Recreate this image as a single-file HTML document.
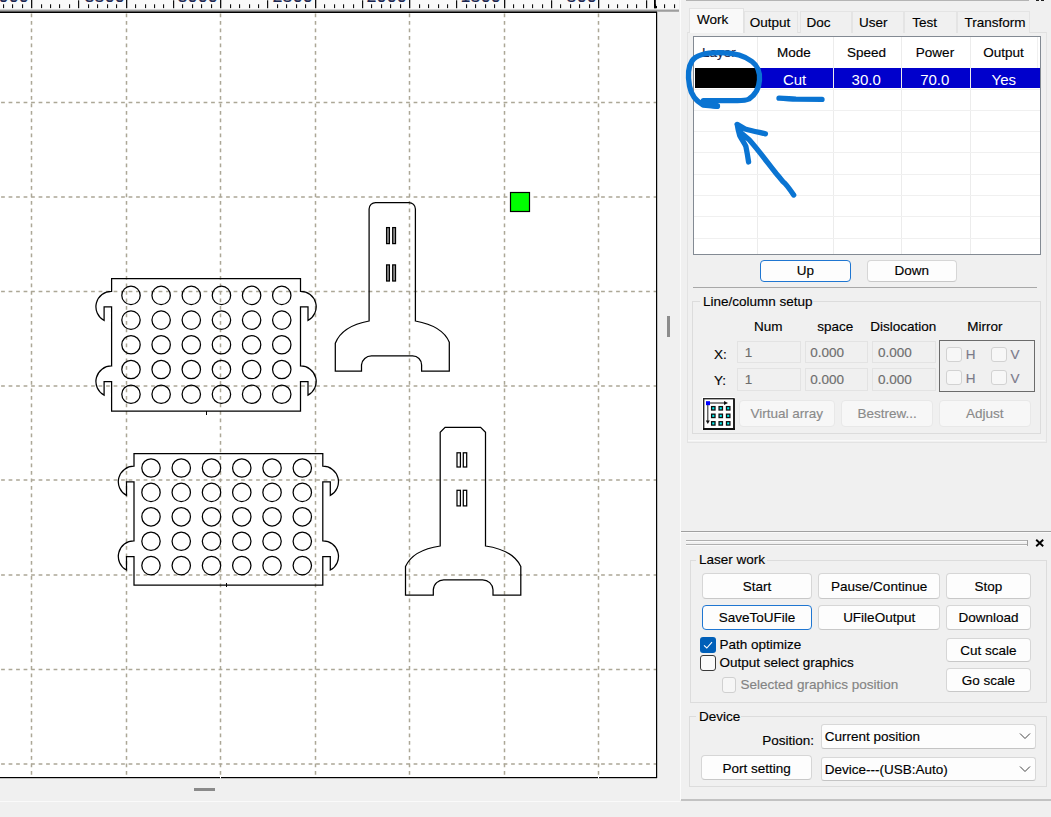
<!DOCTYPE html>
<html><head><meta charset="utf-8"><style>
html,body{margin:0;padding:0;}
body{width:1051px;height:817px;overflow:hidden;background:#f0f0f0;position:relative;font-family:"Liberation Sans", sans-serif;}
.abs{position:absolute;}
.t{position:absolute;white-space:nowrap;-webkit-text-stroke:0.15px currentColor;}
.r{position:absolute;}
</style></head><body>
<svg class="abs" style="left:0;top:0" width="680" height="817" viewBox="0 0 680 817">
<rect x="0" y="12" width="656.5" height="765.5" fill="#fff"/>
<line x1="31.5" y1="13" x2="31.5" y2="777" stroke="#aca796" stroke-width="1.5" stroke-dasharray="3.75 3.75" stroke-dashoffset="7.00"/>
<line x1="126.5" y1="13" x2="126.5" y2="777" stroke="#aca796" stroke-width="1.5" stroke-dasharray="3.75 3.75" stroke-dashoffset="7.00"/>
<line x1="220.5" y1="13" x2="220.5" y2="777" stroke="#aca796" stroke-width="1.5" stroke-dasharray="3.75 3.75" stroke-dashoffset="7.00"/>
<line x1="315.5" y1="13" x2="315.5" y2="777" stroke="#aca796" stroke-width="1.5" stroke-dasharray="3.75 3.75" stroke-dashoffset="7.00"/>
<line x1="409.5" y1="13" x2="409.5" y2="777" stroke="#aca796" stroke-width="1.5" stroke-dasharray="3.75 3.75" stroke-dashoffset="7.00"/>
<line x1="504.5" y1="13" x2="504.5" y2="777" stroke="#aca796" stroke-width="1.5" stroke-dasharray="3.75 3.75" stroke-dashoffset="7.00"/>
<line x1="598.5" y1="13" x2="598.5" y2="777" stroke="#aca796" stroke-width="1.5" stroke-dasharray="3.75 3.75" stroke-dashoffset="7.00"/>
<line x1="0" y1="102.5" x2="656" y2="102.5" stroke="#aca796" stroke-width="1.5" stroke-dasharray="3.75 3.75" stroke-dashoffset="6.40"/>
<line x1="0" y1="197" x2="656" y2="197" stroke="#aca796" stroke-width="1.5" stroke-dasharray="3.75 3.75" stroke-dashoffset="6.40"/>
<line x1="0" y1="291.5" x2="656" y2="291.5" stroke="#aca796" stroke-width="1.5" stroke-dasharray="3.75 3.75" stroke-dashoffset="6.40"/>
<line x1="0" y1="386" x2="656" y2="386" stroke="#aca796" stroke-width="1.5" stroke-dasharray="3.75 3.75" stroke-dashoffset="6.40"/>
<line x1="0" y1="480" x2="656" y2="480" stroke="#aca796" stroke-width="1.5" stroke-dasharray="3.75 3.75" stroke-dashoffset="6.40"/>
<line x1="0" y1="575" x2="656" y2="575" stroke="#aca796" stroke-width="1.5" stroke-dasharray="3.75 3.75" stroke-dashoffset="6.40"/>
<line x1="0" y1="669.5" x2="656" y2="669.5" stroke="#aca796" stroke-width="1.5" stroke-dasharray="3.75 3.75" stroke-dashoffset="6.40"/>
<line x1="0" y1="764" x2="656" y2="764" stroke="#aca796" stroke-width="1.5" stroke-dasharray="3.75 3.75" stroke-dashoffset="6.40"/>
<rect x="656" y="12" width="1.2" height="766" fill="#000"/>
<rect x="0" y="777" width="657" height="1.2" fill="#000"/>
<rect x="220" y="776.5" width="1" height="2" fill="#fff"/>
<rect x="598" y="776.5" width="1" height="2" fill="#fff"/>
<rect x="0" y="0" width="679" height="9" fill="#f9f9f9"/>
<defs><linearGradient id="rg" x1="0" y1="0" x2="0" y2="1"><stop offset="0" stop-color="#e6e6e6"/><stop offset="1" stop-color="#6e6e6e"/></linearGradient></defs>
<rect x="0" y="9" width="679" height="2.5" fill="url(#rg)"/>
<rect x="0" y="11.5" width="657" height="1.5" fill="#000"/>
<rect x="3" y="4.3" width="1.1" height="3.8" fill="#111"/>
<rect x="12" y="4.3" width="1.1" height="3.8" fill="#111"/>
<rect x="22" y="4.3" width="1.1" height="3.8" fill="#111"/>
<rect x="31" y="0" width="1.3" height="8.2" fill="#111"/>
<rect x="41" y="4.3" width="1.1" height="3.8" fill="#111"/>
<rect x="50" y="4.3" width="1.1" height="3.8" fill="#111"/>
<rect x="59" y="4.3" width="1.1" height="3.8" fill="#111"/>
<rect x="69" y="4.3" width="1.1" height="3.8" fill="#111"/>
<rect x="78" y="0.3" width="1.2" height="7.9" fill="#111"/>
<rect x="88" y="4.3" width="1.1" height="3.8" fill="#111"/>
<rect x="97" y="4.3" width="1.1" height="3.8" fill="#111"/>
<rect x="107" y="4.3" width="1.1" height="3.8" fill="#111"/>
<rect x="116" y="4.3" width="1.1" height="3.8" fill="#111"/>
<rect x="126" y="0" width="1.3" height="8.2" fill="#111"/>
<rect x="135" y="4.3" width="1.1" height="3.8" fill="#111"/>
<rect x="145" y="4.3" width="1.1" height="3.8" fill="#111"/>
<rect x="154" y="4.3" width="1.1" height="3.8" fill="#111"/>
<rect x="163" y="4.3" width="1.1" height="3.8" fill="#111"/>
<rect x="173" y="0.3" width="1.2" height="7.9" fill="#111"/>
<rect x="182" y="4.3" width="1.1" height="3.8" fill="#111"/>
<rect x="192" y="4.3" width="1.1" height="3.8" fill="#111"/>
<rect x="201" y="4.3" width="1.1" height="3.8" fill="#111"/>
<rect x="211" y="4.3" width="1.1" height="3.8" fill="#111"/>
<rect x="220" y="0" width="1.3" height="8.2" fill="#111"/>
<rect x="230" y="4.3" width="1.1" height="3.8" fill="#111"/>
<rect x="239" y="4.3" width="1.1" height="3.8" fill="#111"/>
<rect x="249" y="4.3" width="1.1" height="3.8" fill="#111"/>
<rect x="258" y="4.3" width="1.1" height="3.8" fill="#111"/>
<rect x="267" y="0.3" width="1.2" height="7.9" fill="#111"/>
<rect x="277" y="4.3" width="1.1" height="3.8" fill="#111"/>
<rect x="286" y="4.3" width="1.1" height="3.8" fill="#111"/>
<rect x="296" y="4.3" width="1.1" height="3.8" fill="#111"/>
<rect x="305" y="4.3" width="1.1" height="3.8" fill="#111"/>
<rect x="315" y="0" width="1.3" height="8.2" fill="#111"/>
<rect x="324" y="4.3" width="1.1" height="3.8" fill="#111"/>
<rect x="334" y="4.3" width="1.1" height="3.8" fill="#111"/>
<rect x="343" y="4.3" width="1.1" height="3.8" fill="#111"/>
<rect x="353" y="4.3" width="1.1" height="3.8" fill="#111"/>
<rect x="362" y="0.3" width="1.2" height="7.9" fill="#111"/>
<rect x="371" y="4.3" width="1.1" height="3.8" fill="#111"/>
<rect x="381" y="4.3" width="1.1" height="3.8" fill="#111"/>
<rect x="390" y="4.3" width="1.1" height="3.8" fill="#111"/>
<rect x="400" y="4.3" width="1.1" height="3.8" fill="#111"/>
<rect x="409" y="0" width="1.3" height="8.2" fill="#111"/>
<rect x="419" y="4.3" width="1.1" height="3.8" fill="#111"/>
<rect x="428" y="4.3" width="1.1" height="3.8" fill="#111"/>
<rect x="438" y="4.3" width="1.1" height="3.8" fill="#111"/>
<rect x="447" y="4.3" width="1.1" height="3.8" fill="#111"/>
<rect x="456" y="0.3" width="1.2" height="7.9" fill="#111"/>
<rect x="466" y="4.3" width="1.1" height="3.8" fill="#111"/>
<rect x="475" y="4.3" width="1.1" height="3.8" fill="#111"/>
<rect x="485" y="4.3" width="1.1" height="3.8" fill="#111"/>
<rect x="494" y="4.3" width="1.1" height="3.8" fill="#111"/>
<rect x="504" y="0" width="1.3" height="8.2" fill="#111"/>
<rect x="513" y="4.3" width="1.1" height="3.8" fill="#111"/>
<rect x="523" y="4.3" width="1.1" height="3.8" fill="#111"/>
<rect x="532" y="4.3" width="1.1" height="3.8" fill="#111"/>
<rect x="542" y="4.3" width="1.1" height="3.8" fill="#111"/>
<rect x="551" y="0.3" width="1.2" height="7.9" fill="#111"/>
<rect x="560" y="4.3" width="1.1" height="3.8" fill="#111"/>
<rect x="570" y="4.3" width="1.1" height="3.8" fill="#111"/>
<rect x="579" y="4.3" width="1.1" height="3.8" fill="#111"/>
<rect x="589" y="4.3" width="1.1" height="3.8" fill="#111"/>
<rect x="598" y="0" width="1.3" height="8.2" fill="#111"/>
<rect x="608" y="4.3" width="1.1" height="3.8" fill="#111"/>
<rect x="617" y="4.3" width="1.1" height="3.8" fill="#111"/>
<rect x="627" y="4.3" width="1.1" height="3.8" fill="#111"/>
<rect x="636" y="4.3" width="1.1" height="3.8" fill="#111"/>
<rect x="646" y="0.3" width="1.2" height="7.9" fill="#111"/>
<rect x="655" y="4.3" width="1.1" height="3.8" fill="#111"/>
<rect x="664" y="4.3" width="1.1" height="3.8" fill="#111"/>
<rect x="674" y="4.3" width="1.1" height="3.8" fill="#111"/>
<rect x="654" y="0" width="1.8" height="8.2" fill="#000"/><rect x="654" y="6" width="3" height="2.2" fill="#000"/>
</svg>
<div class="abs" style="left:0;top:0;width:656px;height:2.4px;overflow:hidden">
<div class="t" style="left:-31px;top:-12.3px;width:60px;text-align:right;font-size:17px;line-height:17px;color:#1a2550;letter-spacing:0.6px;-webkit-text-stroke:0.4px #1a2550">4000</div>
<div class="t" style="left:65px;top:-12.3px;width:60px;text-align:right;font-size:17px;line-height:17px;color:#1a2550;letter-spacing:0.6px;-webkit-text-stroke:0.4px #1a2550">3500</div>
<div class="t" style="left:158px;top:-12.3px;width:60px;text-align:right;font-size:17px;line-height:17px;color:#1a2550;letter-spacing:0.6px;-webkit-text-stroke:0.4px #1a2550">3000</div>
<div class="t" style="left:253px;top:-12.3px;width:60px;text-align:right;font-size:17px;line-height:17px;color:#1a2550;letter-spacing:0.6px;-webkit-text-stroke:0.4px #1a2550">2500</div>
<div class="t" style="left:347px;top:-12.3px;width:60px;text-align:right;font-size:17px;line-height:17px;color:#1a2550;letter-spacing:0.6px;-webkit-text-stroke:0.4px #1a2550">2000</div>
<div class="t" style="left:441px;top:-12.3px;width:60px;text-align:right;font-size:17px;line-height:17px;color:#1a2550;letter-spacing:0.6px;-webkit-text-stroke:0.4px #1a2550">1500</div>
<div class="t" style="left:537px;top:-12.3px;width:60px;text-align:right;font-size:17px;line-height:17px;color:#1a2550;letter-spacing:0.6px;-webkit-text-stroke:0.4px #1a2550">500</div>
</div>
<svg class="abs" style="left:0;top:0" width="680" height="817" viewBox="0 0 680 817"><g fill="none" stroke="#000" stroke-width="1.25">
<path d="M 111.6 278.7 H 300.5 V 291.30 A 15.5 15.5 0 0 1 308.00 320.46 V 306.90 H 300.50 V 366.00 A 15.5 15.5 0 0 1 308.00 395.16 V 381.60 H 300.50 V 411.1 H 111.6 V 381.60 H 104.10 V 395.16 A 15.5 15.5 0 0 1 111.60 366.00 V 306.90 H 104.10 V 320.46 A 15.5 15.5 0 0 1 111.60 291.30 Z"/>
<circle cx="131.00" cy="295.40" r="9.2"/>
<circle cx="161.15" cy="295.40" r="9.2"/>
<circle cx="191.30" cy="295.40" r="9.2"/>
<circle cx="221.45" cy="295.40" r="9.2"/>
<circle cx="251.60" cy="295.40" r="9.2"/>
<circle cx="281.75" cy="295.40" r="9.2"/>
<circle cx="131.00" cy="320.10" r="9.2"/>
<circle cx="161.15" cy="320.10" r="9.2"/>
<circle cx="191.30" cy="320.10" r="9.2"/>
<circle cx="221.45" cy="320.10" r="9.2"/>
<circle cx="251.60" cy="320.10" r="9.2"/>
<circle cx="281.75" cy="320.10" r="9.2"/>
<circle cx="131.00" cy="344.80" r="9.2"/>
<circle cx="161.15" cy="344.80" r="9.2"/>
<circle cx="191.30" cy="344.80" r="9.2"/>
<circle cx="221.45" cy="344.80" r="9.2"/>
<circle cx="251.60" cy="344.80" r="9.2"/>
<circle cx="281.75" cy="344.80" r="9.2"/>
<circle cx="131.00" cy="369.50" r="9.2"/>
<circle cx="161.15" cy="369.50" r="9.2"/>
<circle cx="191.30" cy="369.50" r="9.2"/>
<circle cx="221.45" cy="369.50" r="9.2"/>
<circle cx="251.60" cy="369.50" r="9.2"/>
<circle cx="281.75" cy="369.50" r="9.2"/>
<circle cx="131.00" cy="394.20" r="9.2"/>
<circle cx="161.15" cy="394.20" r="9.2"/>
<circle cx="191.30" cy="394.20" r="9.2"/>
<circle cx="221.45" cy="394.20" r="9.2"/>
<circle cx="251.60" cy="394.20" r="9.2"/>
<circle cx="281.75" cy="394.20" r="9.2"/>
<path d="M 134.0 453.6 H 322.8 V 466.20 A 15.5 15.5 0 0 1 330.30 495.36 V 481.80 H 322.80 V 540.90 A 15.5 15.5 0 0 1 330.30 570.06 V 556.50 H 322.80 V 585.0 H 134.0 V 556.50 H 126.50 V 570.06 A 15.5 15.5 0 0 1 134.00 540.90 V 481.80 H 126.50 V 495.36 A 15.5 15.5 0 0 1 134.00 466.20 Z"/>
<circle cx="151.00" cy="468.00" r="9.2"/>
<circle cx="181.26" cy="468.00" r="9.2"/>
<circle cx="211.52" cy="468.00" r="9.2"/>
<circle cx="241.78" cy="468.00" r="9.2"/>
<circle cx="272.04" cy="468.00" r="9.2"/>
<circle cx="302.30" cy="468.00" r="9.2"/>
<circle cx="151.00" cy="492.40" r="9.2"/>
<circle cx="181.26" cy="492.40" r="9.2"/>
<circle cx="211.52" cy="492.40" r="9.2"/>
<circle cx="241.78" cy="492.40" r="9.2"/>
<circle cx="272.04" cy="492.40" r="9.2"/>
<circle cx="302.30" cy="492.40" r="9.2"/>
<circle cx="151.00" cy="516.80" r="9.2"/>
<circle cx="181.26" cy="516.80" r="9.2"/>
<circle cx="211.52" cy="516.80" r="9.2"/>
<circle cx="241.78" cy="516.80" r="9.2"/>
<circle cx="272.04" cy="516.80" r="9.2"/>
<circle cx="302.30" cy="516.80" r="9.2"/>
<circle cx="151.00" cy="541.20" r="9.2"/>
<circle cx="181.26" cy="541.20" r="9.2"/>
<circle cx="211.52" cy="541.20" r="9.2"/>
<circle cx="241.78" cy="541.20" r="9.2"/>
<circle cx="272.04" cy="541.20" r="9.2"/>
<circle cx="302.30" cy="541.20" r="9.2"/>
<circle cx="151.00" cy="565.60" r="9.2"/>
<circle cx="181.26" cy="565.60" r="9.2"/>
<circle cx="211.52" cy="565.60" r="9.2"/>
<circle cx="241.78" cy="565.60" r="9.2"/>
<circle cx="272.04" cy="565.60" r="9.2"/>
<circle cx="302.30" cy="565.60" r="9.2"/>
<line x1="206.5" y1="411" x2="206.5" y2="415" stroke-width="1"/>
<line x1="226.5" y1="583" x2="226.5" y2="587" stroke-width="1"/>
<path d="M 369.1 321 V 209 A 6.5 6.5 0 0 1 375.6 202.5 H 408.9 A 6.5 6.5 0 0 1 415.4 209 V 321 Q 442.7 326 449.3 342.3 V 371.2 H 421.6 V 364.9 A 9 9 0 0 0 412.6 355.9 H 371.5 A 10 10 0 0 0 361.5 364.9 V 371.2 H 335.3 V 343.3 Q 342 326 369.1 321 Z"/>
<rect x="386.6" y="227.6" width="2.8" height="16.0" fill="#9a9a9a"/>
<rect x="392.7" y="227.6" width="2.8" height="16.0" fill="#9a9a9a"/>
<rect x="386.6" y="264.9" width="2.8" height="16.1" fill="#9a9a9a"/>
<rect x="392.7" y="264.9" width="2.8" height="16.1" fill="#9a9a9a"/>
<path d="M 440.2 546 V 432.2 L 445.1 427.3 H 480.6 L 485.5 432.2 V 546 Q 513 550 520.8 566.5 V 595.2 H 493 V 589.7 A 10.5 10.5 0 0 0 482.5 579.8 H 444 A 10.5 10.5 0 0 0 433.3 589.7 V 595.2 H 405.5 V 566.5 Q 413 550 440.2 546 Z"/>
<rect x="457" y="452.8" width="3.4" height="14.2"/>
<rect x="463.3" y="452.8" width="3.4" height="14.2"/>
<rect x="457" y="490.3" width="3.4" height="15.6"/>
<rect x="463.3" y="490.3" width="3.4" height="15.6"/>
</g><rect x="510.5" y="192.5" width="19" height="19" fill="#00ff00" stroke="#000" stroke-width="1.2"/>
</svg>
<div class="r" style="left:667.0px;top:316.0px;width:3.0px;height:21.0px;background:#8c8c8c"></div>
<div class="r" style="left:194.0px;top:788.0px;width:21.0px;height:2.5px;background:#8a8a8a"></div>
<div class="r" style="left:0.0px;top:800.5px;width:680.0px;height:1.0px;background:#fafafa"></div>
<div class="r" style="left:680.0px;top:0.0px;width:1.0px;height:800.0px;background:#fbfbfb"></div>
<div class="r" style="left:681.0px;top:799.0px;width:370.0px;height:1.5px;background:#c2c2c2"></div>
<div class="r" style="left:686.0px;top:0.0px;width:343.0px;height:1.2px;background:#b4b4b4"></div>
<div class="r" style="left:1036.0px;top:0.0px;width:3.0px;height:1.0px;background:#222"></div>
<div class="r" style="left:1041.0px;top:0.0px;width:3.0px;height:1.0px;background:#222"></div>
<div class="r" style="left:687.0px;top:32.0px;width:358.0px;height:409.0px;border:1px solid #e3e3e3;border-top-color:#e0e0e0;background:#f0f0f0"></div>
<div class="r" style="left:688.0px;top:439.5px;width:356.5px;height:1.5px;background:#f9f9f9"></div>
<div class="r" style="left:744.4px;top:10.7px;width:53.9px;height:22.3px;background:#f0f0f0;border:1px solid #e4e4e4;border-bottom:none;box-sizing:border-box"></div>
<div class="t" style="left:749.7px;top:15.57px;font-size:13.5px;line-height:13.5px;color:#000;">Output</div>
<div class="r" style="left:800.0px;top:10.7px;width:51.6px;height:22.3px;background:#f0f0f0;border:1px solid #e4e4e4;border-bottom:none;box-sizing:border-box"></div>
<div class="t" style="left:806.6px;top:15.57px;font-size:13.5px;line-height:13.5px;color:#000;">Doc</div>
<div class="r" style="left:851.6px;top:10.7px;width:52.4px;height:22.3px;background:#f0f0f0;border:1px solid #e4e4e4;border-bottom:none;box-sizing:border-box"></div>
<div class="t" style="left:859.1px;top:15.57px;font-size:13.5px;line-height:13.5px;color:#000;">User</div>
<div class="r" style="left:904.0px;top:10.7px;width:52.5px;height:22.3px;background:#f0f0f0;border:1px solid #e4e4e4;border-bottom:none;box-sizing:border-box"></div>
<div class="t" style="left:912.3px;top:15.57px;font-size:13.5px;line-height:13.5px;color:#000;">Test</div>
<div class="r" style="left:956.5px;top:10.7px;width:73.5px;height:22.3px;background:#f0f0f0;border:1px solid #e4e4e4;border-bottom:none;box-sizing:border-box"></div>
<div class="t" style="left:964.5px;top:15.57px;font-size:13.5px;line-height:13.5px;color:#000;">Transform</div>
<div class="r" style="left:688.5px;top:7.6px;width:55.5px;height:25.9px;background:#f9f9f9;border:1px solid #e2e2e2;border-bottom:none;box-sizing:border-box"></div>
<div class="t" style="left:697.1px;top:13.27px;font-size:13.5px;line-height:13.5px;color:#000;">Work</div>
<div class="r" style="left:692.5px;top:36.0px;width:348.5px;height:219.0px;background:#fff;border:1px solid #838a93;box-sizing:border-box"></div>
<div class="r" style="left:756.5px;top:37.0px;width:1.0px;height:217.0px;background:#ececec"></div>
<div class="r" style="left:832.5px;top:37.0px;width:1.0px;height:217.0px;background:#ececec"></div>
<div class="r" style="left:901.0px;top:37.0px;width:1.0px;height:217.0px;background:#ececec"></div>
<div class="r" style="left:969.5px;top:37.0px;width:1.0px;height:217.0px;background:#ececec"></div>
<div class="r" style="left:1037.0px;top:37.0px;width:1.0px;height:31.0px;background:#f0f0f0"></div>
<div class="r" style="left:693.5px;top:88.5px;width:346.5px;height:1.0px;background:#f0f0f0"></div>
<div class="r" style="left:693.5px;top:109.8px;width:346.5px;height:1.0px;background:#f0f0f0"></div>
<div class="r" style="left:693.5px;top:131.1px;width:346.5px;height:1.0px;background:#f0f0f0"></div>
<div class="r" style="left:693.5px;top:152.4px;width:346.5px;height:1.0px;background:#f0f0f0"></div>
<div class="r" style="left:693.5px;top:173.7px;width:346.5px;height:1.0px;background:#f0f0f0"></div>
<div class="r" style="left:693.5px;top:195.0px;width:346.5px;height:1.0px;background:#f0f0f0"></div>
<div class="r" style="left:693.5px;top:216.3px;width:346.5px;height:1.0px;background:#f0f0f0"></div>
<div class="r" style="left:693.5px;top:237.6px;width:346.5px;height:1.0px;background:#f0f0f0"></div>
<div class="t" style="left:702.0px;top:46.37px;font-size:13.5px;line-height:13.5px;color:#202040;">Layer</div>
<div class="t" style="left:754.0px;top:46.37px;width:80px;text-align:center;font-size:13.5px;line-height:13.5px;color:#000;">Mode</div>
<div class="t" style="left:826.5px;top:46.37px;width:80px;text-align:center;font-size:13.5px;line-height:13.5px;color:#000;">Speed</div>
<div class="t" style="left:895.0px;top:46.37px;width:80px;text-align:center;font-size:13.5px;line-height:13.5px;color:#000;">Power</div>
<div class="t" style="left:963.5px;top:46.37px;width:80px;text-align:center;font-size:13.5px;line-height:13.5px;color:#000;">Output</div>
<div class="r" style="left:694.5px;top:68.0px;width:62.0px;height:20.0px;background:#000"></div>
<div class="r" style="left:757.5px;top:68.0px;width:75.0px;height:20.0px;background:#0000cc"></div>
<div class="r" style="left:833.5px;top:68.0px;width:67.5px;height:20.0px;background:#0000cc"></div>
<div class="r" style="left:902.0px;top:68.0px;width:67.5px;height:20.0px;background:#0000cc"></div>
<div class="r" style="left:970.5px;top:68.0px;width:69.0px;height:20.0px;background:#0000cc"></div>
<div class="t" style="left:759.6px;top:71.60px;width:70px;text-align:center;font-size:15px;line-height:15px;color:#fff;-webkit-text-stroke:0">Cut</div>
<div class="t" style="left:831.2px;top:71.60px;width:70px;text-align:center;font-size:15px;line-height:15px;color:#fff;-webkit-text-stroke:0">30.0</div>
<div class="t" style="left:899.8px;top:71.60px;width:70px;text-align:center;font-size:15px;line-height:15px;color:#fff;-webkit-text-stroke:0">70.0</div>
<div class="t" style="left:968.8px;top:71.60px;width:70px;text-align:center;font-size:15px;line-height:15px;color:#fff;-webkit-text-stroke:0">Yes</div>
<div class="r" style="left:760.0px;top:260.0px;width:90.6px;height:21.5px;background:#fdfdfd;border:1.3px solid #1f76d1;border-radius:4px;box-sizing:border-box"></div>
<div class="t" style="left:740.0px;top:263.92px;width:130.60000000000002px;text-align:center;font-size:13.5px;line-height:13.5px;color:#000;">Up</div>
<div class="r" style="left:866.8px;top:260.0px;width:90.0px;height:21.5px;background:#fdfdfd;border:1px solid #d6d6d6;border-bottom-color:#c8c8c8;border-radius:4px;box-sizing:border-box"></div>
<div class="t" style="left:846.8px;top:263.92px;width:130.0px;text-align:center;font-size:13.5px;line-height:13.5px;color:#000;">Down</div>
<div class="r" style="left:692.5px;top:286.6px;width:344.8px;height:1.2px;background:#a8a8a8"></div>
<div class="r" style="left:692.2px;top:301.2px;width:348.4px;height:132.4px;border:1px solid #dcdcdc;box-sizing:border-box"></div>
<div class="r" style="left:700.0px;top:295.0px;width:113.0px;height:11.0px;background:#f0f0f0"></div>
<div class="t" style="left:703.0px;top:294.77px;font-size:13.5px;line-height:13.5px;color:#000;">Line/column setup</div>
<div class="t" style="left:738.2px;top:320.37px;width:60px;text-align:center;font-size:13.5px;line-height:13.5px;color:#000;">Num</div>
<div class="t" style="left:805.2px;top:320.37px;width:60px;text-align:center;font-size:13.5px;line-height:13.5px;color:#000;">space</div>
<div class="t" style="left:858.3px;top:320.37px;width:90px;text-align:center;font-size:13.5px;line-height:13.5px;color:#000;">Dislocation</div>
<div class="t" style="left:954.8px;top:320.37px;width:60px;text-align:center;font-size:13.5px;line-height:13.5px;color:#000;">Mirror</div>
<div class="t" style="left:714.0px;top:347.77px;font-size:13.5px;line-height:13.5px;color:#000;">X:</div>
<div class="t" style="left:714.0px;top:374.37px;font-size:13.5px;line-height:13.5px;color:#000;">Y:</div>
<div class="r" style="left:736.9px;top:341.2px;width:64.0px;height:21.8px;background:#f0f0f0;border:1px solid #e3e3e3;box-sizing:border-box"></div>
<div class="r" style="left:804.8px;top:341.2px;width:63.2px;height:21.8px;background:#f0f0f0;border:1px solid #e3e3e3;box-sizing:border-box"></div>
<div class="r" style="left:872.1px;top:341.2px;width:63.9px;height:21.8px;background:#f0f0f0;border:1px solid #e3e3e3;box-sizing:border-box"></div>
<div class="t" style="left:744.7px;top:345.57px;font-size:13.5px;line-height:13.5px;color:#6d6d6d;">1</div>
<div class="t" style="left:810.3px;top:345.57px;font-size:13.5px;line-height:13.5px;color:#6d6d6d;">0.000</div>
<div class="t" style="left:878.0px;top:345.57px;font-size:13.5px;line-height:13.5px;color:#6d6d6d;">0.000</div>
<div class="r" style="left:736.9px;top:368.2px;width:64.0px;height:22.5px;background:#f0f0f0;border:1px solid #e3e3e3;box-sizing:border-box"></div>
<div class="r" style="left:804.8px;top:368.2px;width:63.2px;height:22.5px;background:#f0f0f0;border:1px solid #e3e3e3;box-sizing:border-box"></div>
<div class="r" style="left:872.1px;top:368.2px;width:63.9px;height:22.5px;background:#f0f0f0;border:1px solid #e3e3e3;box-sizing:border-box"></div>
<div class="t" style="left:744.7px;top:372.77px;font-size:13.5px;line-height:13.5px;color:#6d6d6d;">1</div>
<div class="t" style="left:810.3px;top:372.77px;font-size:13.5px;line-height:13.5px;color:#6d6d6d;">0.000</div>
<div class="t" style="left:878.0px;top:372.77px;font-size:13.5px;line-height:13.5px;color:#6d6d6d;">0.000</div>
<div class="r" style="left:939.0px;top:339.8px;width:95.5px;height:52.2px;border:1.4px solid #6b6b6b;box-sizing:border-box"></div>
<div class="r" style="left:946.2px;top:346.7px;width:15.6px;height:15.0px;background:#f7f7f7;border:1px solid #d2d2d2;border-radius:3px;box-sizing:border-box"></div>
<div class="t" style="left:965.8px;top:347.57px;font-size:13.5px;line-height:13.5px;color:#7a7a8a;">H</div>
<div class="r" style="left:991.2px;top:346.7px;width:15.6px;height:15.0px;background:#f7f7f7;border:1px solid #d2d2d2;border-radius:3px;box-sizing:border-box"></div>
<div class="t" style="left:1010.4px;top:347.57px;font-size:13.5px;line-height:13.5px;color:#7a7a8a;">V</div>
<div class="r" style="left:946.2px;top:369.8px;width:15.6px;height:15.0px;background:#f7f7f7;border:1px solid #d2d2d2;border-radius:3px;box-sizing:border-box"></div>
<div class="t" style="left:965.8px;top:372.17px;font-size:13.5px;line-height:13.5px;color:#7a7a8a;">H</div>
<div class="r" style="left:991.2px;top:369.8px;width:15.6px;height:15.0px;background:#f7f7f7;border:1px solid #d2d2d2;border-radius:3px;box-sizing:border-box"></div>
<div class="t" style="left:1010.4px;top:372.17px;font-size:13.5px;line-height:13.5px;color:#7a7a8a;">V</div>
<svg class="abs" style="left:702px;top:396.5px" width="34" height="34" viewBox="0 0 34 34"><rect x="0" y="0" width="33" height="33" fill="#fff"/><rect x="1.7" y="1.7" width="30" height="30" fill="#fff" stroke="#2a2a2a" stroke-width="1.4"/><rect x="31" y="1.5" width="2" height="31.5" fill="#222"/><rect x="1" y="31" width="32" height="2" fill="#111"/><rect x="4" y="4.2" width="4" height="4" fill="#0000ff"/><line x1="8" y1="6" x2="24" y2="6" stroke="#111" stroke-width="1"/><path d="M22 4 L26 6 L22 8 Z" fill="#111"/><line x1="5.8" y1="8" x2="5.8" y2="24" stroke="#333" stroke-width="1.1"/><path d="M3.8 23.5 L5.8 27 L7.8 23.5 Z" fill="#111"/><rect x="9.60" y="9.60" width="3.4" height="3.4" fill="#00f0f0" stroke="#111" stroke-width="1.3"/><rect x="17.05" y="9.60" width="3.4" height="3.4" fill="#00f0f0" stroke="#111" stroke-width="1.3"/><rect x="24.50" y="9.60" width="3.4" height="3.4" fill="#00f0f0" stroke="#111" stroke-width="1.3"/><rect x="9.60" y="17.15" width="3.4" height="3.4" fill="#00f0f0" stroke="#111" stroke-width="1.3"/><rect x="17.05" y="17.15" width="3.4" height="3.4" fill="#00f0f0" stroke="#111" stroke-width="1.3"/><rect x="24.50" y="17.15" width="3.4" height="3.4" fill="#00f0f0" stroke="#111" stroke-width="1.3"/><rect x="9.60" y="24.70" width="3.4" height="3.4" fill="#00f0f0" stroke="#111" stroke-width="1.3"/><rect x="17.05" y="24.70" width="3.4" height="3.4" fill="#00f0f0" stroke="#111" stroke-width="1.3"/><rect x="24.50" y="24.70" width="3.4" height="3.4" fill="#00f0f0" stroke="#111" stroke-width="1.3"/></svg>
<div class="r" style="left:738.8px;top:399.5px;width:96.0px;height:27.5px;background:#f7f7f7;border:1px solid #e8e8e8;border-radius:4px;box-sizing:border-box"></div>
<div class="t" style="left:718.8px;top:406.67px;width:136.0px;text-align:center;font-size:13.5px;line-height:13.5px;color:#8a8a8a;">Virtual array</div>
<div class="r" style="left:840.6px;top:399.5px;width:92.9px;height:27.5px;background:#f7f7f7;border:1px solid #e8e8e8;border-radius:4px;box-sizing:border-box"></div>
<div class="t" style="left:820.6px;top:406.67px;width:132.89999999999998px;text-align:center;font-size:13.5px;line-height:13.5px;color:#8a8a8a;">Bestrew...</div>
<div class="r" style="left:938.7px;top:399.5px;width:92.3px;height:27.5px;background:#f7f7f7;border:1px solid #e8e8e8;border-radius:4px;box-sizing:border-box"></div>
<div class="t" style="left:918.7px;top:406.67px;width:132.29999999999995px;text-align:center;font-size:13.5px;line-height:13.5px;color:#8a8a8a;">Adjust</div>
<div class="r" style="left:681.0px;top:530.5px;width:370.0px;height:1.3px;background:#a0a0a0"></div>
<div class="r" style="left:681.0px;top:531.8px;width:370.0px;height:0.8px;background:#f9f9f9"></div>
<div class="r" style="left:686.0px;top:540.0px;width:342.0px;height:1.3px;background:#b0b0b0"></div>
<div class="r" style="left:686.0px;top:541.3px;width:342.0px;height:0.7px;background:#fafafa"></div>
<div class="r" style="left:686.0px;top:543.8px;width:342.0px;height:1.2px;background:#b0b0b0"></div>
<div class="r" style="left:686.0px;top:545.0px;width:342.0px;height:0.8px;background:#fafafa"></div>
<div class="r" style="left:1027.0px;top:539.5px;width:1.2px;height:6.3px;background:#a0a0a0"></div>
<svg class="abs" style="left:1035px;top:538.5px" width="10" height="8" viewBox="0 0 10 8"><path d="M1.2 0.8 L8.2 7.2 M8.2 0.8 L1.2 7.2" stroke="#000" stroke-width="1.9"/></svg>
<div class="r" style="left:689.5px;top:559.5px;width:357.0px;height:143.0px;border:1px solid #dcdcdc;box-sizing:border-box"></div>
<div class="r" style="left:696.0px;top:553.0px;width:71.0px;height:11.0px;background:#f0f0f0"></div>
<div class="t" style="left:699.0px;top:553.37px;font-size:13.5px;line-height:13.5px;color:#000;">Laser work</div>
<div class="r" style="left:701.6px;top:573.3px;width:110.9px;height:25.5px;background:#fdfdfd;border:1px solid #d6d6d6;border-bottom-color:#c8c8c8;border-radius:4px;box-sizing:border-box"></div>
<div class="t" style="left:681.6px;top:580.17px;width:150.89999999999998px;text-align:center;font-size:13.5px;line-height:13.5px;color:#000;">Start</div>
<div class="r" style="left:818.3px;top:573.3px;width:121.7px;height:25.5px;background:#fdfdfd;border:1px solid #d6d6d6;border-bottom-color:#c8c8c8;border-radius:4px;box-sizing:border-box"></div>
<div class="t" style="left:798.3px;top:580.17px;width:161.70000000000005px;text-align:center;font-size:13.5px;line-height:13.5px;color:#000;">Pause/Continue</div>
<div class="r" style="left:945.8px;top:573.3px;width:85.4px;height:25.5px;background:#fdfdfd;border:1px solid #d6d6d6;border-bottom-color:#c8c8c8;border-radius:4px;box-sizing:border-box"></div>
<div class="t" style="left:925.8px;top:580.17px;width:125.40000000000009px;text-align:center;font-size:13.5px;line-height:13.5px;color:#000;">Stop</div>
<div class="r" style="left:701.6px;top:604.6px;width:110.9px;height:25.6px;background:#fdfdfd;border:1.3px solid #1f76d1;border-radius:4px;box-sizing:border-box"></div>
<div class="t" style="left:681.6px;top:610.87px;width:150.89999999999998px;text-align:center;font-size:13.5px;line-height:13.5px;color:#000;">SaveToUFile</div>
<div class="r" style="left:818.3px;top:604.6px;width:121.7px;height:25.6px;background:#fdfdfd;border:1px solid #d6d6d6;border-bottom-color:#c8c8c8;border-radius:4px;box-sizing:border-box"></div>
<div class="t" style="left:798.3px;top:610.87px;width:161.70000000000005px;text-align:center;font-size:13.5px;line-height:13.5px;color:#000;">UFileOutput</div>
<div class="r" style="left:945.8px;top:604.6px;width:85.4px;height:25.6px;background:#fdfdfd;border:1px solid #d6d6d6;border-bottom-color:#c8c8c8;border-radius:4px;box-sizing:border-box"></div>
<div class="t" style="left:925.8px;top:610.87px;width:125.40000000000009px;text-align:center;font-size:13.5px;line-height:13.5px;color:#000;">Download</div>
<div class="r" style="left:945.8px;top:637.6px;width:85.4px;height:24.9px;background:#fdfdfd;border:1px solid #d6d6d6;border-bottom-color:#c8c8c8;border-radius:4px;box-sizing:border-box"></div>
<div class="t" style="left:925.8px;top:644.07px;width:125.40000000000009px;text-align:center;font-size:13.5px;line-height:13.5px;color:#000;">Cut scale</div>
<div class="r" style="left:945.8px;top:667.8px;width:85.4px;height:24.7px;background:#fdfdfd;border:1px solid #d6d6d6;border-bottom-color:#c8c8c8;border-radius:4px;box-sizing:border-box"></div>
<div class="t" style="left:925.8px;top:674.07px;width:125.40000000000009px;text-align:center;font-size:13.5px;line-height:13.5px;color:#000;">Go scale</div>
<div class="r" style="left:700.0px;top:637.2px;width:15.8px;height:15.6px;background:#005fb8;border-radius:3px"></div>
<svg class="abs" style="left:700px;top:637.2px" width="16" height="16" viewBox="0 0 16 16"><path d="M4 8.3 L6.8 11 L12 5.2" fill="none" stroke="#fff" stroke-width="1.1"/></svg>
<div class="t" style="left:719.4px;top:638.17px;font-size:13.5px;line-height:13.5px;color:#000;">Path optimize</div>
<div class="r" style="left:700.0px;top:655.3px;width:15.8px;height:15.3px;background:#fafafa;border:1.1px solid #3a3a3a;border-radius:3px;box-sizing:border-box"></div>
<div class="t" style="left:719.4px;top:656.17px;font-size:13.5px;line-height:13.5px;color:#000;">Output select graphics</div>
<div class="r" style="left:721.6px;top:677.4px;width:14.8px;height:15.2px;background:#f6f6f6;border:1px solid #d0d0d0;border-radius:3px;box-sizing:border-box"></div>
<div class="t" style="left:740.6px;top:677.77px;font-size:13.5px;line-height:13.5px;color:#838383;">Selected graphics position</div>
<div class="r" style="left:689.0px;top:716.3px;width:357.5px;height:71.2px;border:1px solid #dcdcdc;box-sizing:border-box"></div>
<div class="r" style="left:696.0px;top:709.0px;width:45.0px;height:11.0px;background:#f0f0f0"></div>
<div class="t" style="left:699.0px;top:710.17px;font-size:13.5px;line-height:13.5px;color:#000;">Device</div>
<div class="t" style="left:762.3px;top:734.17px;font-size:13.5px;line-height:13.5px;color:#000;">Position:</div>
<div class="r" style="left:700.8px;top:755.2px;width:111.6px;height:24.6px;background:#fdfdfd;border:1px solid #d6d6d6;border-bottom-color:#c8c8c8;border-radius:4px;box-sizing:border-box"></div>
<div class="t" style="left:680.8px;top:761.77px;width:151.60000000000002px;text-align:center;font-size:13.5px;line-height:13.5px;color:#000;">Port setting</div>
<div class="r" style="left:820.7px;top:723.5px;width:214.9px;height:25.3px;background:#fdfdfd;border:1px solid #d8d8d8;border-bottom-color:#c4c4c4;border-radius:3px;box-sizing:border-box"></div>
<div class="t" style="left:824.8px;top:729.77px;font-size:13.5px;line-height:13.5px;color:#000;">Current position</div>
<svg class="abs" style="left:1019px;top:732.1px" width="12" height="8" viewBox="0 0 12 8"><path d="M1 1.5 L6 6.5 L11 1.5" fill="none" stroke="#444" stroke-width="1"/></svg>
<div class="r" style="left:820.7px;top:756.5px;width:214.9px;height:24.9px;background:#fdfdfd;border:1px solid #d8d8d8;border-bottom-color:#c4c4c4;border-radius:3px;box-sizing:border-box"></div>
<div class="t" style="left:824.8px;top:762.57px;font-size:13.5px;line-height:13.5px;color:#000;">Device---(USB:Auto)</div>
<svg class="abs" style="left:1019px;top:765.0px" width="12" height="8" viewBox="0 0 12 8"><path d="M1 1.5 L6 6.5 L11 1.5" fill="none" stroke="#444" stroke-width="1"/></svg>
<svg class="abs" style="left:0;top:0" width="1051" height="817" viewBox="0 0 1051 817"><g fill="none" stroke="#0a74d2" stroke-width="5.3" stroke-linecap="round" stroke-linejoin="round"><path d="M717.5 106.3 L703 105 C696 101, 691 94, 689.5 86 C688 78, 687.5 68, 692 61 C696 55, 708 52.5, 721 52.7 C733 53, 745 56, 752 61.5 C758 66, 760 73, 759.5 80 C759 88, 755 95, 749 99 C745 101, 741 100.7, 735 100.7 L703.4 100.7"/><path d="M703 103.5 L717 106" stroke-width="6"/><path d="M779 98.2 C786 98.3, 790 99, 796 99.2 L822 99.4"/><path d="M793.7 195 C789 188, 785 183, 782.9 181.6 C780 178, 778 175.5, 776.2 173.5 C770 166, 760 152, 749.2 139.8 L741.2 133.1 L737.1 124.3 L745.2 129 C752 131, 760 132.5, 765.4 133.8 M737.5 126 C738 130, 739 133, 739.8 135.8 C742 140, 745 144, 745.9 146.5 C747 152, 748 158, 748.6 162"/></g></svg>
</body></html>
